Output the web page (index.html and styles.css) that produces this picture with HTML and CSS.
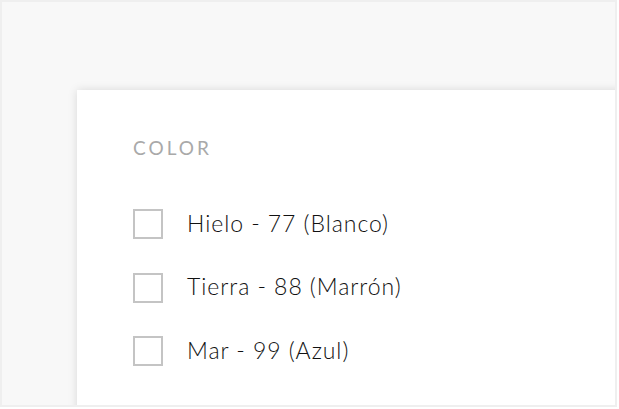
FILE: index.html
```html
<!DOCTYPE html>
<html lang="es">
<head>
<meta charset="utf-8">
<link rel="stylesheet" href="styles.css">
</head>
<body>
<div class="frame">
  <div class="card">
    <h3 class="title">COLOR</h3>
    <ul class="options">
      <li class="option"><span class="box"></span><span class="label">Hielo - 77 (Blanco)</span></li>
      <li class="option"><span class="box"></span><span class="label">Tierra - 88 (Marrón)</span></li>
      <li class="option"><span class="box"></span><span class="label">Mar - 99 (Azul)</span></li>
    </ul>
  </div>
</div>
</body>
</html>
```
FILE: styles.css
```css
html, body {
  margin: 0;
  padding: 0;
  background: #ffffff;
}
.frame {
  border: 2px solid #efefef;
  background: #f8f8f8;
  overflow: hidden;
  padding: 88px 0 0 75px;
  box-sizing: content-box;
  width: 538px;
  height: 315px;
}
.card {
  background: #fff;
  box-shadow: 0 0 9px rgba(0, 0, 0, 0.13);
  height: 360px;
  width: 600px;
  padding: 47px 0 0 56px;
  box-sizing: border-box;
  font-family: Lato, "Liberation Sans", sans-serif;
}
.title {
  margin: 0;
  font-size: 19px;
  line-height: 22px;
  font-weight: 400;
  letter-spacing: 3px;
  color: #a9a9a9;
}
.options {
  list-style: none;
  margin: 50px 0 0 0;
  padding: 0;
  display: flex;
  flex-direction: column;
  gap: 33.5px;
}
.option {
  display: flex;
  align-items: center;
  gap: 24px;
  height: 30px;
}
.box {
  width: 30px;
  height: 30px;
  box-sizing: border-box;
  border: 2px solid #c4c4c4;
  flex: none;
}
.label {
  font-size: 23px;
  line-height: 28px;
  font-weight: 300;
  color: #111;
  letter-spacing: 0.95px;
  margin-top: -3px;
}
```
